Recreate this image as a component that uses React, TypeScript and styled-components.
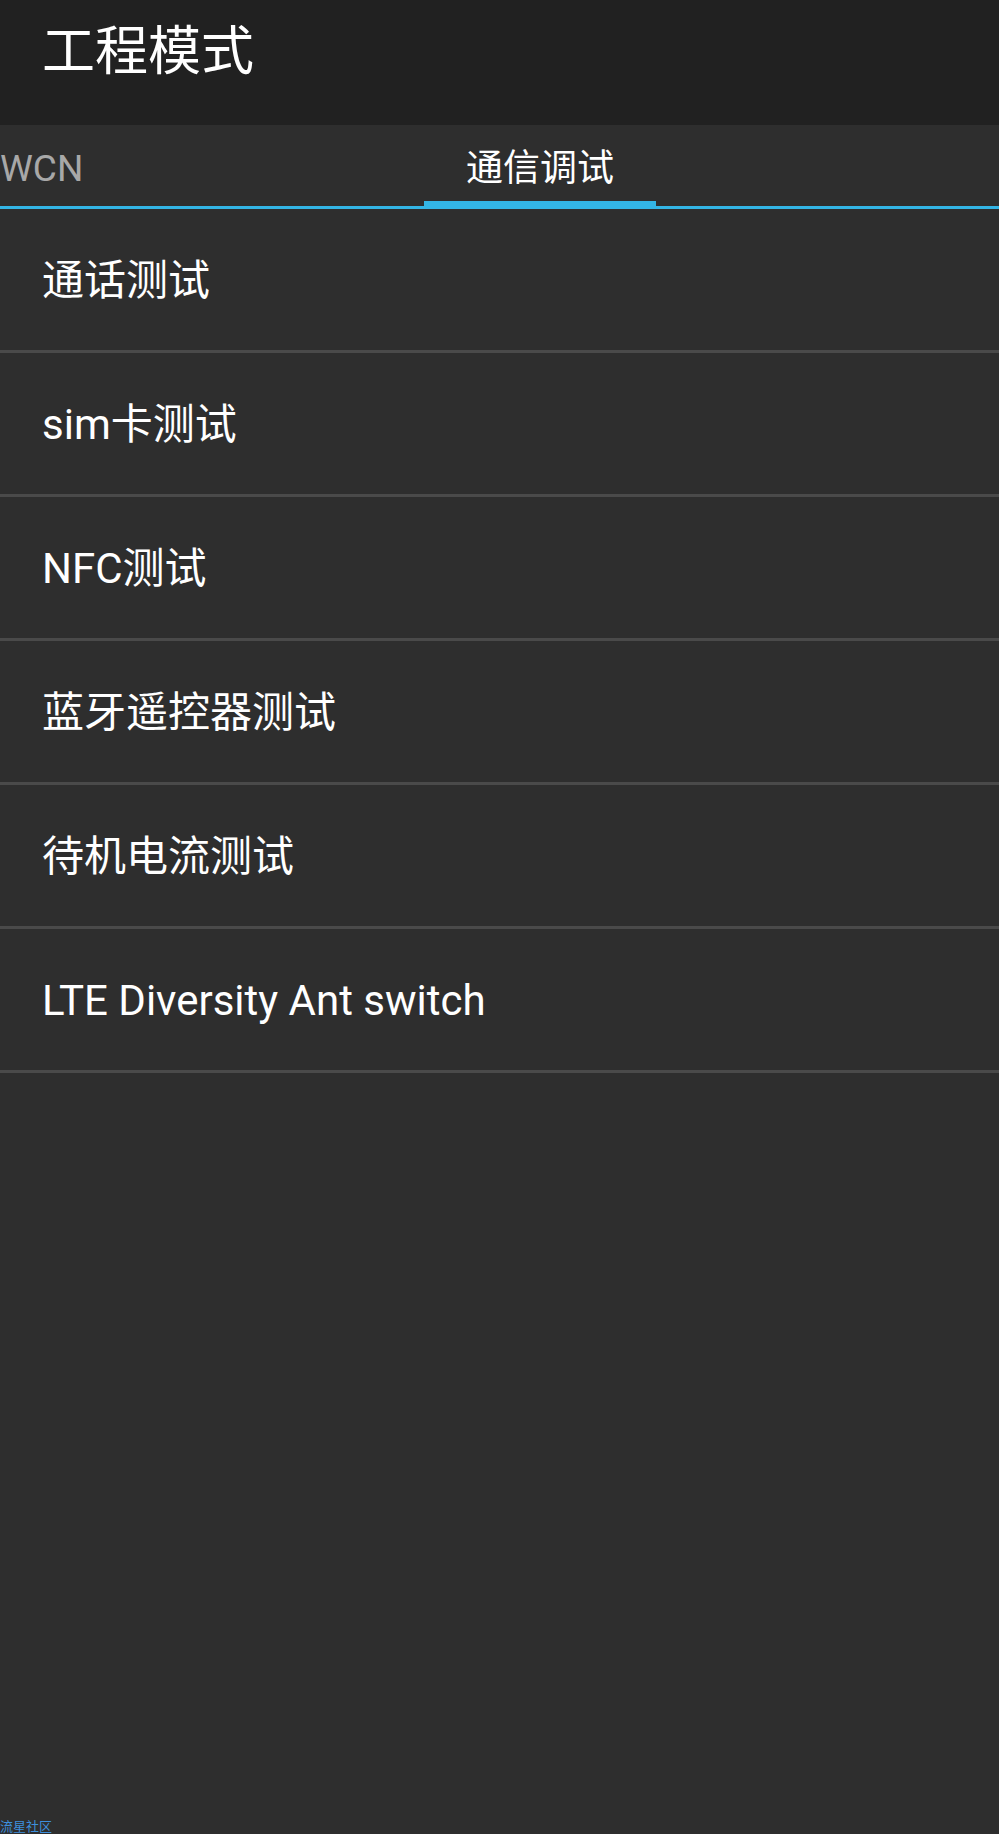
import styled, { createGlobalStyle } from 'styled-components'

const GlobalStyle = createGlobalStyle`
  html, body {
    margin: 0;
    padding: 0;
    background: #2e2e2e;
  }
  body {
    font-family: Roboto, "Noto Sans CJK SC", "Noto Sans", sans-serif;
    color: #ffffff;
  }
`

const ITEMS = [
  '通话测试',
  'sim卡测试',
  'NFC测试',
  '蓝牙遥控器测试',
  '待机电流测试',
  'LTE Diversity Ant switch',
]

const TABS = [
  { label: 'WCN', width: 424, align: 'flex-start', active: false },
  { label: '通信调试', width: 232, align: 'center', active: true },
]

function App() {
  return (
    <Page>
      <GlobalStyle />
      <ActionBar>
        <Title>工程模式</Title>
      </ActionBar>
      <TabBar>
        {TABS.map((t) => (
          <Tab key={t.label} $width={t.width} $align={t.align} $active={t.active}>
            {t.label}
          </Tab>
        ))}
      </TabBar>
      <List>
        {ITEMS.map((item) => (
          <ListItem key={item}>{item}</ListItem>
        ))}
      </List>
      <Watermark>流星社区</Watermark>
    </Page>
  )
}

export default App

const Page = styled.div`
  min-height: 1834px;
  display: flex;
  flex-direction: column;
  background: #2e2e2e;
  box-sizing: border-box;
`

const ActionBar = styled.header`
  height: 125px;
  background: #212121;
  display: flex;
  align-items: center;
  padding: 0 0 20px 42px;
  box-sizing: border-box;
`

const Title = styled.h1`
  margin: 0;
  font-size: 53px;
  font-weight: 400;
  line-height: 1;
  color: #ffffff;
`

const TabBar = styled.nav`
  height: 84px;
  display: flex;
  border-bottom: 3px solid #33b5e5;
  box-sizing: border-box;
  overflow: hidden;
`

const Tab = styled.div<{ $width: number; $align: string; $active: boolean }>`
  width: ${({ $width }) => $width}px;
  flex-shrink: 0;
  display: flex;
  align-items: center;
  justify-content: ${({ $align }) => $align};
  padding-top: 10px;
  box-sizing: border-box;
  font-size: 37px;
  line-height: 1;
  color: ${({ $active }) => ($active ? '#ffffff' : '#a8a8a8')};
  border-bottom: 5px solid ${({ $active }) => ($active ? '#33b5e5' : 'transparent')};
`

const List = styled.ul`
  list-style: none;
  margin: 0;
  padding: 0;
`

const ListItem = styled.li`
  height: 144px;
  display: flex;
  align-items: center;
  padding: 3px 0 0 42px;
  box-sizing: border-box;
  border-bottom: 3px solid #4a4a4a;
  font-size: 42px;
  line-height: 1;
  color: #ffffff;
`

const Watermark = styled.div`
  margin-top: auto;
  font-size: 13px;
  line-height: 14px;
  color: #3d8fdc;
`
